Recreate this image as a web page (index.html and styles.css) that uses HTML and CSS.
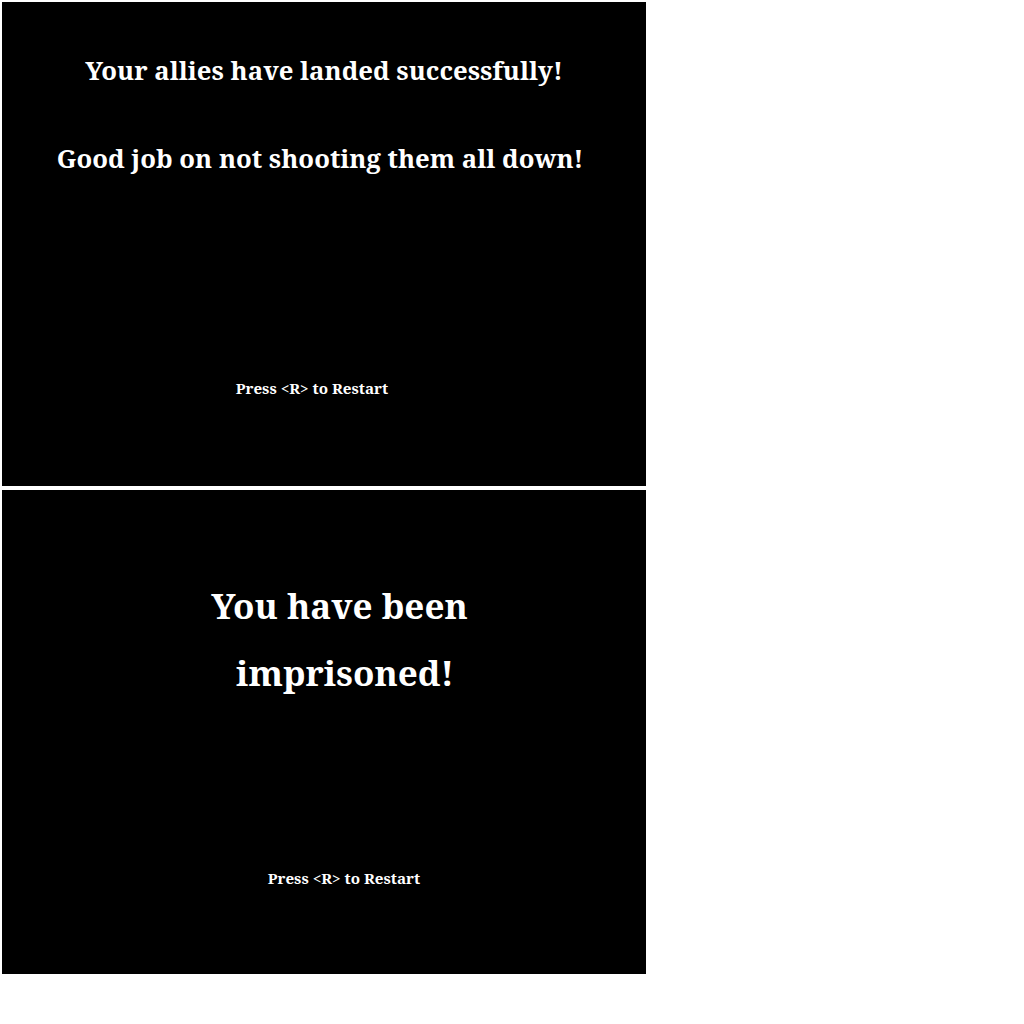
FILE: index.html
```html
<!DOCTYPE html>
<html>
<head>
<meta charset="utf-8">
<link rel="stylesheet" href="styles.css">
</head>
<body>
<main class="screens">
  <section class="screen screen-win">
    <p class="msg msg-win-1">Your allies have landed successfully!</p>
    <p class="msg msg-win-2">Good job on not shooting them all down!</p>
    <p class="hint hint-win">Press &lt;R&gt; to Restart</p>
  </section>
  <section class="screen screen-lose">
    <p class="big big-1">You have been</p>
    <p class="big big-2">imprisoned!</p>
    <p class="hint hint-lose">Press &lt;R&gt; to Restart</p>
  </section>
</main>
</body>
</html>
```
FILE: styles.css
```css
html, body {
  margin: 0;
  padding: 0;
  background: #fff;
}
body {
  padding: 2px;
}
.screens {
  display: flex;
  flex-direction: column;
  gap: 4px;
  align-items: flex-start;
}
.screen {
  width: 644px;
  height: 484px;
  background: #000;
  color: #fff;
  font-family: "Noto Serif", "DejaVu Serif", serif;
  font-weight: bold;
  box-sizing: border-box;
  display: flex;
  flex-direction: column;
}
.screen p {
  margin: 0;
  text-align: center;
  white-space: nowrap;
}
.screen-win {
  padding-top: 54px;
}
.msg {
  font-size: 25.7px;
  line-height: 30px;
}
.msg-win-2 {
  margin-top: 58px !important;
  padding-right: 8px;
}
.hint {
  font-size: 15.2px;
  line-height: 20px;
}
.hint-win {
  margin-top: 204px !important;
  padding-right: 24px;
}
.screen-lose {
  padding-top: 83px;
}
.big {
  font-size: 35px;
  line-height: 66px;
}
.big-1 {
  padding-left: 31px;
}
.big-2 {
  padding-left: 42px;
  margin-top: 1px !important;
}
.hint-lose {
  margin-top: 162px !important;
  padding-left: 40px;
}
```
